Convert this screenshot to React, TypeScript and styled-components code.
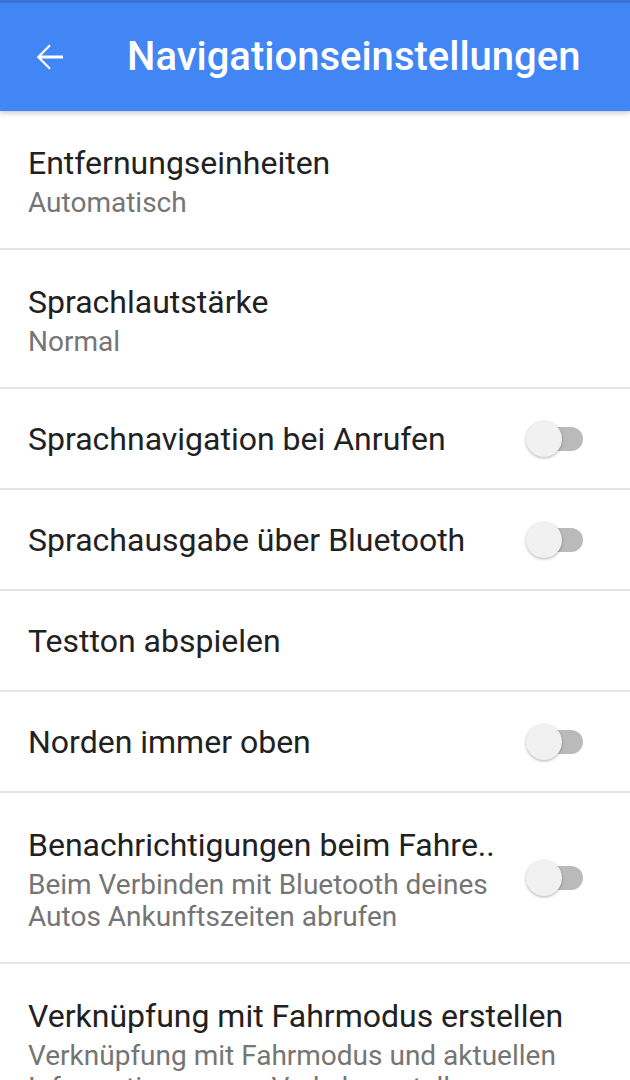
import React, { FC, ReactElement, useState } from 'react';
import styled, { createGlobalStyle } from 'styled-components';

const GlobalStyle = createGlobalStyle`
    html, body {
        margin: 0;
        padding: 0;
        background: #ffffff;
        font-family: Roboto, "Noto Sans", "Liberation Sans", sans-serif;
    }
`

const Page = styled.div`
    width: 630px;
    height: 1080px;
    overflow: hidden;
    background: #ffffff;
`

const Toolbar = styled.header`
    position: relative;
    z-index: 1;
    display: flex;
    align-items: center;
    height: 108px;
    border-top: 3px solid #3a72d6;
    background: #4285f4;
    box-shadow: 0 2px 5px rgba(0, 0, 0, 0.22);
`

const BackButton = styled.button`
    display: flex;
    align-items: center;
    justify-content: center;
    width: 56px;
    height: 56px;
    margin-left: 21px;
    padding: 0;
    border: none;
    background: transparent;
`

const Title = styled.h1`
    margin: 0 0 0 50px;
    color: #ffffff;
    font-size: 40px;
    font-weight: 500;
    line-height: 48px;
`

const List = styled.div`
    display: flex;
    flex-direction: column;
`

const Row = styled.div<{ $twoLine: boolean }>`
    display: flex;
    align-items: center;
    padding: ${p => p.$twoLine ? '30px 47px 29px 28px' : '28px 47px 27px 28px'};
    border-bottom: 2px solid #e4e4e4;
`

const Texts = styled.div`
    flex: 1;
    min-width: 0;
    display: flex;
    flex-direction: column;
`

const Label = styled.div`
    color: #212121;
    font-size: 32px;
    line-height: 44px;
    white-space: nowrap;
`

const Summary = styled.div`
    margin-top: 2px;
    color: #757575;
    font-size: 28px;
    line-height: 32px;
`

const Switch = styled.div`
    position: relative;
    flex: none;
    width: 57px;
    height: 36px;
    margin-left: 30px;
`

const Track = styled.div`
    position: absolute;
    left: 9px;
    right: 0;
    top: 6px;
    height: 24px;
    border-radius: 12px;
    background: #bababa;
`

const Thumb = styled.div`
    position: absolute;
    left: 0;
    top: 0;
    width: 36px;
    height: 36px;
    border-radius: 50%;
    background: #f1f1f1;
    box-shadow: 0 1px 3px rgba(0, 0, 0, 0.3);
`

type Setting = {
    label: string;
    summary?: string;
    toggle?: boolean;
}

const settings: Setting[] = [
    { label: 'Entfernungseinheiten', summary: 'Automatisch' },
    { label: 'Sprachlautstärke', summary: 'Normal' },
    { label: 'Sprachnavigation bei Anrufen', toggle: true },
    { label: 'Sprachausgabe über Bluetooth', toggle: true },
    { label: 'Testton abspielen' },
    { label: 'Norden immer oben', toggle: true },
    { label: 'Benachrichtigungen beim Fahre..', summary: 'Beim Verbinden mit Bluetooth deines Autos Ankunftszeiten abrufen', toggle: true },
    { label: 'Verknüpfung mit Fahrmodus erstellen', summary: 'Verknüpfung mit Fahrmodus und aktuellen Informationen zum Verkehr erstellen' },
]

const ArrowBack = () => (
    <svg width="42" height="42" viewBox="0 0 24 24">
        <path d="M20 11.1H7.6l5.4-5.4-0.9-0.9L5 12l7.1 7.2 0.9-0.9-5.4-5.4H20z" fill="#ffffff" />
    </svg>
)

const App: FC = (): ReactElement => {
    const [checked] = useState<boolean>(false);

    return (
        <Page>
            <GlobalStyle />
            <Toolbar>
                <BackButton aria-label="Zurück"><ArrowBack /></BackButton>
                <Title>Navigationseinstellungen</Title>
            </Toolbar>
            <List>
                {settings.map(s => (
                    <Row key={s.label} $twoLine={!!s.summary}>
                        <Texts>
                            <Label>{s.label}</Label>
                            {s.summary && <Summary>{s.summary}</Summary>}
                        </Texts>
                        {s.toggle && (
                            <Switch aria-checked={checked} role="switch">
                                <Track />
                                <Thumb />
                            </Switch>
                        )}
                    </Row>
                ))}
            </List>
        </Page>
    )
}

export default App;
